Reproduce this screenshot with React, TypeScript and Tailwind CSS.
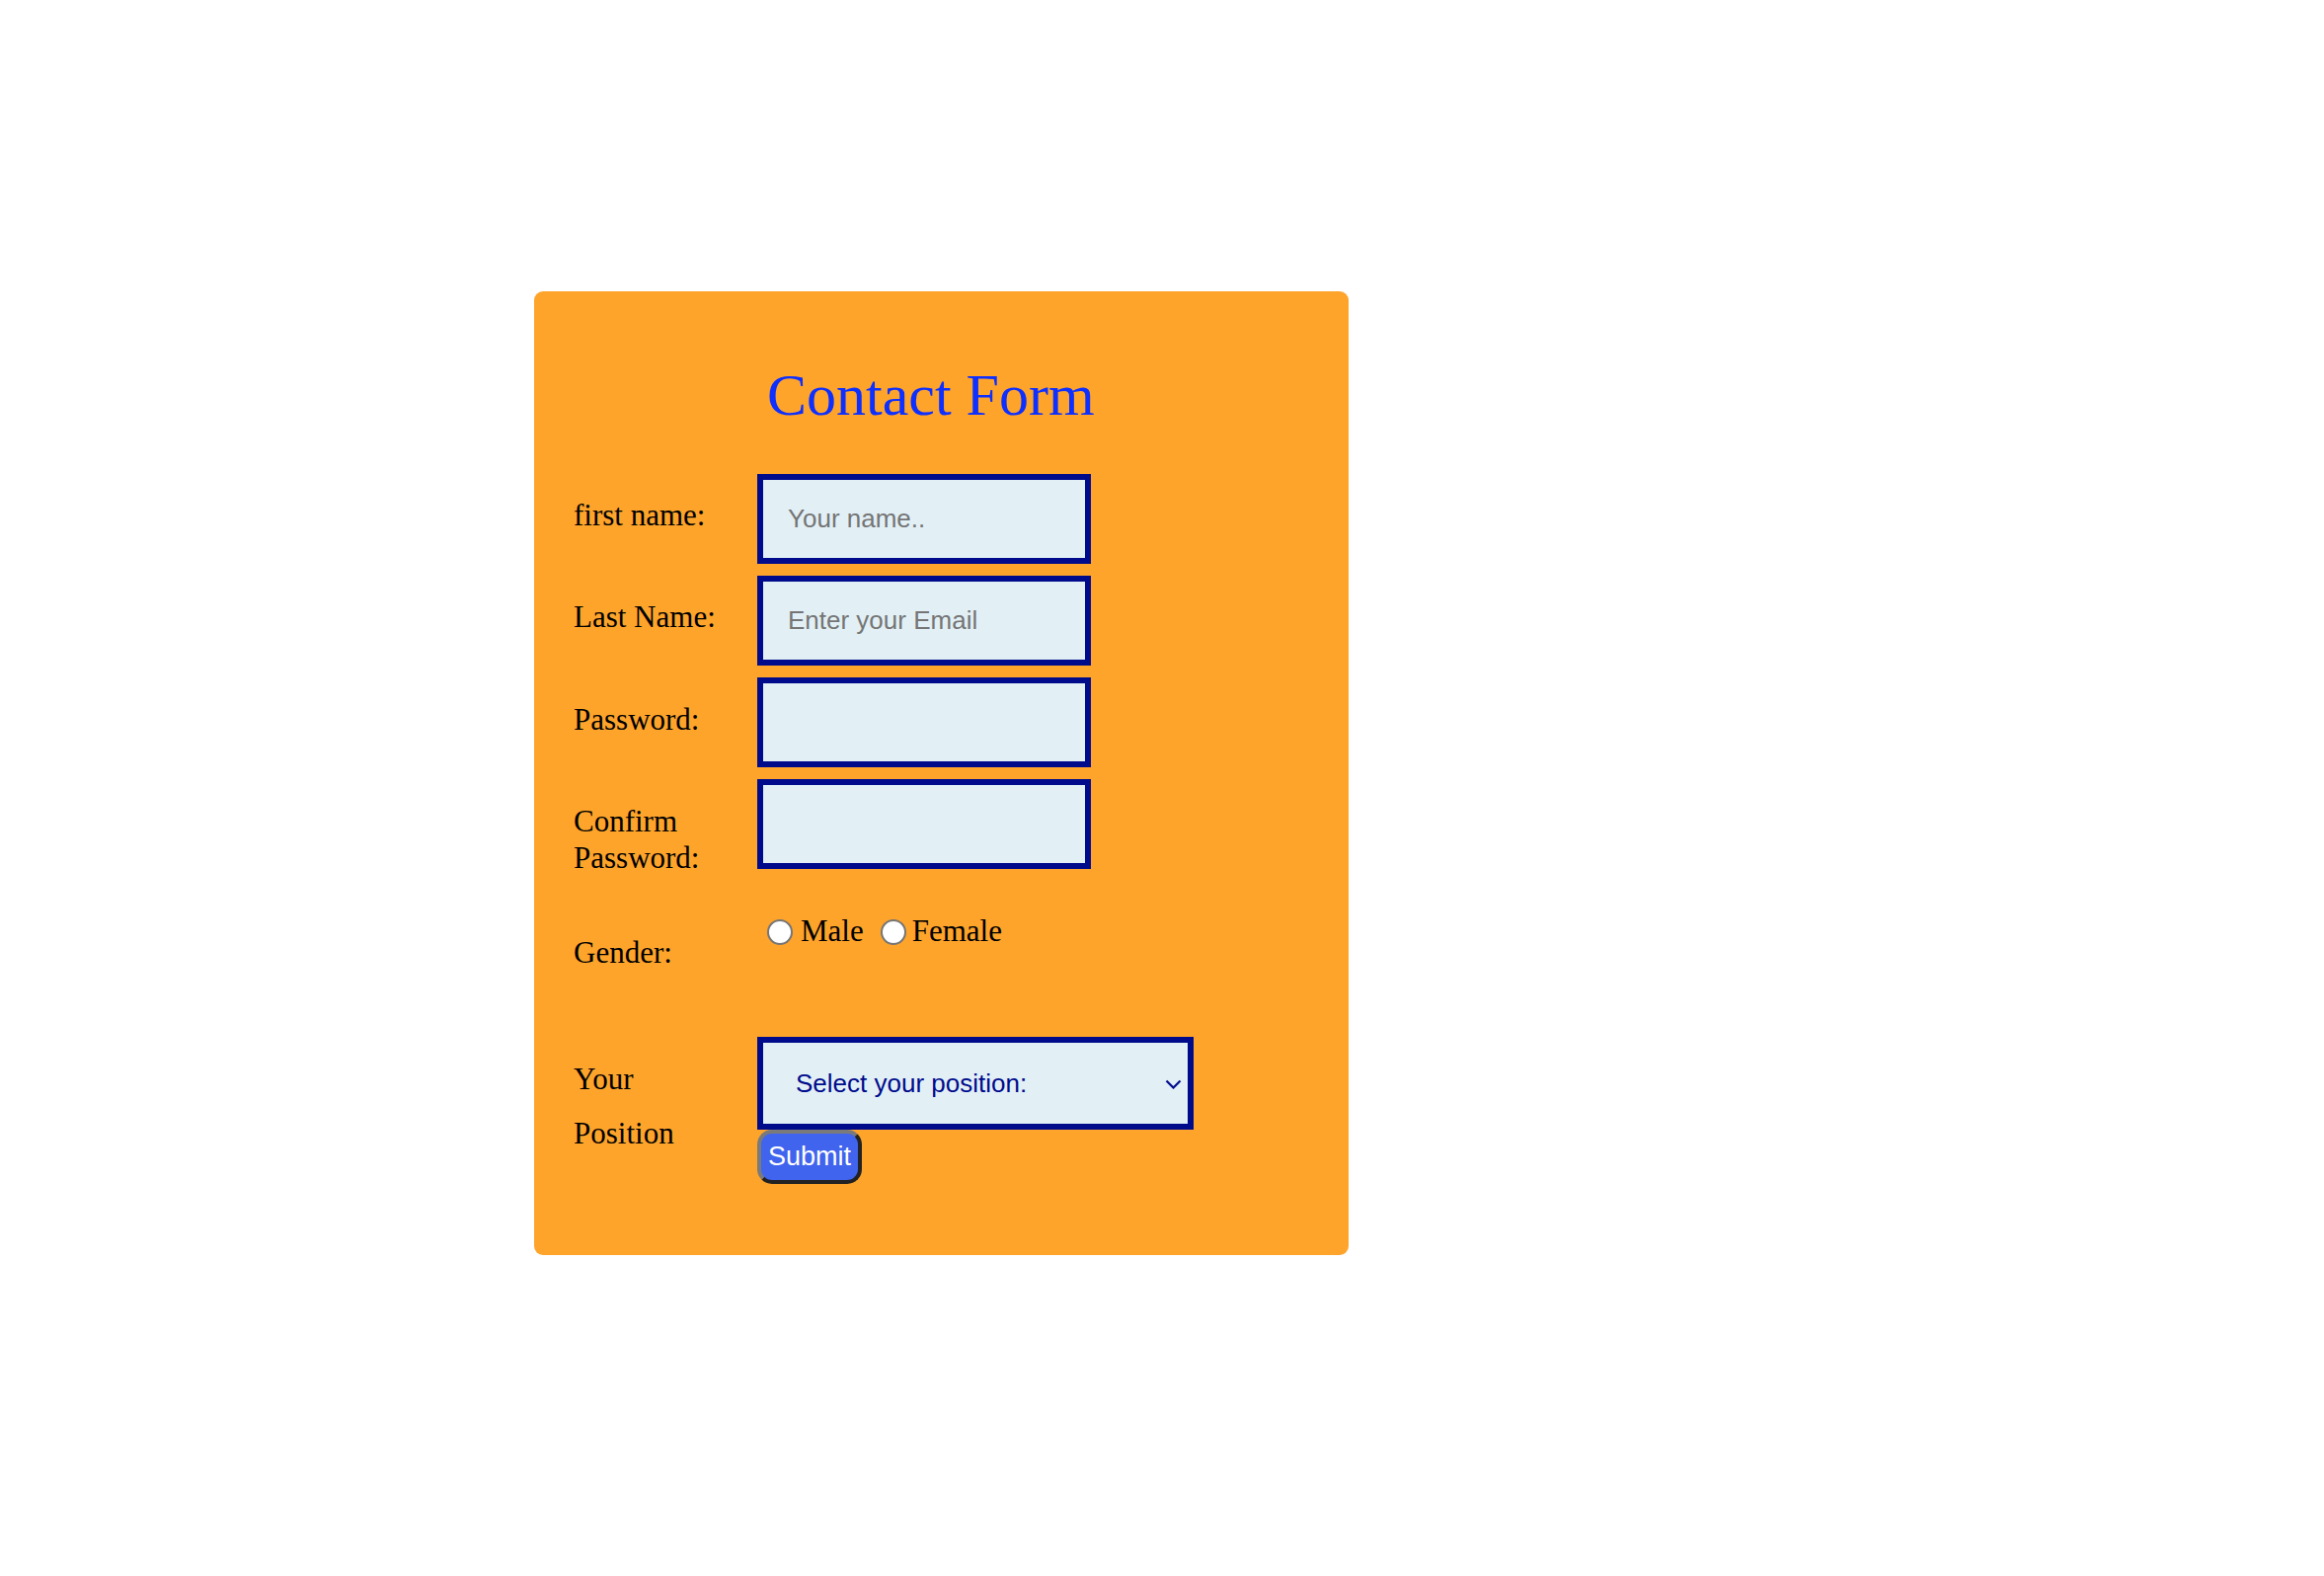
import { useState } from "react";

const textFields = [
  { label: "first name:", type: "text", placeholder: "Your name..", labelPad: "pt-[23px]" },
  { label: "Last Name:", type: "email", placeholder: "Enter your Email", labelPad: "pt-[23px]" },
  { label: "Password:", type: "password", placeholder: "", labelPad: "pt-[24px]" },
  { label: "Confirm Password:", type: "password", placeholder: "", labelPad: "pt-[24px]" },
];

const genders = ["Male", "Female"];

function Radio({ checked, onClick }: { checked: boolean; onClick: () => void }) {
  return (
    <span
      onClick={onClick}
      className="w-[26px] h-[26px] rounded-full bg-white border-2 border-[#767676] flex items-center justify-center shrink-0 cursor-pointer"
    >
      {checked && <span className="w-[14px] h-[14px] rounded-full bg-[#1a73e8]" />}
    </span>
  );
}

export default function App() {
  const [gender, setGender] = useState("");

  return (
    <div className="min-h-screen bg-white pt-[295px] pl-[541px] font-['Liberation_Serif',serif] text-black">
      {/* Card */}
      <div className="w-[825px] h-[976px] bg-[#fea42b] rounded-[9px] pl-[40px] pt-[71px]">
        <h1 className="pl-[196px] text-[60px] leading-[69px] text-[#0d2fff]">Contact Form</h1>

        <form className="mt-[45px]" onSubmit={(e) => e.preventDefault()}>
          {/* Text inputs */}
          <div className="flex flex-col gap-[12px]">
            {textFields.map((field, index) => (
              <div key={index} className="flex items-start h-[91px]">
                <label className={`w-[186px] pr-[40px] text-[31px] leading-[37px] ${field.labelPad}`}>
                  {field.label}
                </label>
                <input
                  type={field.type}
                  placeholder={field.placeholder}
                  className="w-[338px] h-[91px] border-[6px] border-[#000b8c] bg-[#e2f0f6] pl-[25px] text-[26px] font-['Liberation_Sans',sans-serif] placeholder:text-[#757575] outline-none"
                />
              </div>
            ))}
          </div>

          {/* Gender */}
          <div className="flex items-start mt-[45px]">
            <span className="w-[186px] pt-[21px] text-[31px] leading-[37px]">Gender:</span>
            <div className="flex items-center h-[37px] pl-[10px] text-[31px]">
              {genders.map((g, i) => (
                <div key={g} className={`flex items-center ${i > 0 ? "ml-[17px]" : ""}`}>
                  <Radio checked={gender === g} onClick={() => setGender(g)} />
                  <span className={i === 0 ? "ml-[8px]" : "ml-[6px]"}>{g}</span>
                </div>
              ))}
            </div>
          </div>

          {/* Position + submit */}
          <div className="flex items-start mt-[67px]">
            <span className="w-[186px] pt-[15px] text-[31px] leading-[55px]">
              Your
              <br />
              Position
            </span>
            <div className="flex flex-col items-start">
              <div className="relative w-[442px] h-[94px]">
                <select className="appearance-none w-full h-full border-[6px] border-[#000b8c] bg-[#e2f0f6] pl-[33px] text-[26px] text-[#000b8c] font-['Liberation_Sans',sans-serif] outline-none">
                  <option>Select your position:</option>
                  <option>Student</option>
                  <option>Teacher</option>
                  <option>Other</option>
                </select>
                <svg
                  className="absolute right-[12px] top-[43px] pointer-events-none"
                  width="17"
                  height="10"
                  viewBox="0 0 17 10"
                  fill="none"
                >
                  <polyline points="1.5,1.5 8.5,8.5 15.5,1.5" stroke="#000b8c" strokeWidth="2.2" />
                </svg>
              </div>
              <button
                type="submit"
                className="w-[106px] h-[55px] rounded-[15px] border-[4px] border-t-[#7a7a7a] border-l-[#7a7a7a] border-b-[#222222] border-r-[#222222] bg-[#4164ee] text-white text-[27px] font-['Liberation_Sans',sans-serif] leading-none"
              >
                Submit
              </button>
            </div>
          </div>
        </form>
      </div>
    </div>
  );
}
